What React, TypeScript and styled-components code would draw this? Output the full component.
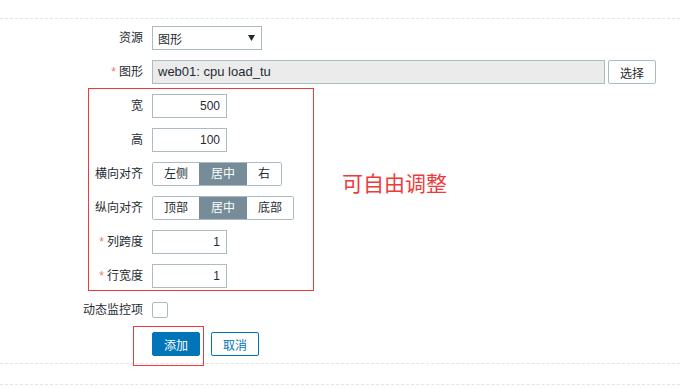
import React from 'react';
import styled, { createGlobalStyle } from 'styled-components';

const TEXT = '#1f2c33';
const BORDER = '#acbbc2';
const BLUE = '#0275b8';
const MARK = '#ee3a3a';

const GlobalStyle = createGlobalStyle`
  body {
    margin: 0;
    background: #fff;
    color: ${TEXT};
    font-family: "Liberation Sans", "Noto Sans CJK SC", sans-serif;
    font-size: 12px;
  }
`;

const Page = styled.div`
  position: relative;
  width: 680px;
  height: 388px;
  overflow: hidden;
  padding-top: 18px;
  box-sizing: border-box;
`;

const Form = styled.div`
  display: grid;
  grid-template-columns: 143px 1fr;
  column-gap: 9px;
  row-gap: 10px;
  align-items: center;
  padding: 7px 24px 7px 0;
  border-top: 1px dashed #e4e4e4;
  border-bottom: 1px dashed #e4e4e4;
`;

const NextSection = styled.div`
  margin-top: 20px;
  border-top: 1px dashed #e4e4e4;
`;

const Label = styled.label`
  text-align: right;
  line-height: 24px;
  white-space: nowrap;
`;

const Star = styled.span`
  color: #ec7a6e;
  margin-right: 3px;
`;

const Field = styled.div`
  display: flex;
  align-items: center;
  gap: ${({ $gap }) => $gap ?? 0}px;
  height: 24px;
`;

const Select = styled.div`
  box-sizing: border-box;
  width: 110px;
  height: 24px;
  border: 1px solid ${BORDER};
  display: flex;
  align-items: center;
  justify-content: space-between;
  padding: 0 6px 0 5px;
`;

const TextBox = styled.div`
  box-sizing: border-box;
  width: ${({ $width }) => $width}px;
  height: 24px;
  border: 1px solid ${BORDER};
  line-height: 22px;
  padding: 0 6px 0 5px;
  text-align: ${({ $align }) => $align ?? 'left'};
  background: ${({ $readonly }) => ($readonly ? '#ebebeb' : '#fff')};
  font-size: ${({ $readonly }) => ($readonly ? 13 : 12)}px;
`;

const Button = styled.button`
  box-sizing: border-box;
  height: 24px;
  padding: 0 11px;
  font: inherit;
  border-radius: 2px;
  border: 1px solid ${({ $variant }) => ($variant === 'grey' ? BORDER : BLUE)};
  background: ${({ $variant }) => ($variant === 'primary' ? BLUE : '#fff')};
  color: ${({ $variant }) => ($variant === 'primary' ? '#fff' : $variant === 'outline' ? BLUE : TEXT)};
`;

const Segmented = styled.div`
  display: flex;
  height: 24px;
  border: 1px solid ${BORDER};
  border-radius: 2px;
  box-sizing: border-box;
  overflow: hidden;
`;

const Segment = styled.span`
  padding: 0 11px;
  line-height: 22px;
  background: ${({ $active }) => ($active ? '#768d99' : '#fff')};
  color: ${({ $active }) => ($active ? '#fff' : TEXT)};
  & + & {
    border-left: 1px solid ${({ $active }) => ($active ? '#768d99' : BORDER)};
  }
`;

const Checkbox = styled.span`
  width: 16px;
  height: 16px;
  box-sizing: border-box;
  border: 1px solid ${BORDER};
  border-radius: 2px;
  background: #fff;
`;

const Frame = styled.div`
  position: absolute;
  left: ${({ $x }) => $x}px;
  top: ${({ $y }) => $y}px;
  width: ${({ $w }) => $w}px;
  height: ${({ $h }) => $h}px;
  border: 1px solid ${MARK};
  box-sizing: border-box;
  pointer-events: none;
`;

const Note = styled.div`
  position: absolute;
  left: 342px;
  top: 172px;
  font-size: 21px;
  line-height: 24px;
  color: ${MARK};
`;

const Arrow = () => (
  <svg width="7" height="6" viewBox="0 0 7 6">
    <polygon points="0,0 7,0 3.5,6" fill={TEXT} />
  </svg>
);

const SegmentGroup = ({ items, active }) => (
  <Segmented>
    {items.map((item) => (
      <Segment key={item} $active={item === active}>{item}</Segment>
    ))}
  </Segmented>
);

const App = () => (
  <Page>
    <GlobalStyle />
    <Form>
      <Label>资源</Label>
      <Field>
        <Select>
          <span>图形</span>
          <Arrow />
        </Select>
      </Field>

      <Label><Star>*</Star>图形</Label>
      <Field $gap={3}>
        <TextBox $width={453} $readonly>web01: cpu load_tu</TextBox>
        <Button $variant="grey">选择</Button>
      </Field>

      <Label>宽</Label>
      <Field><TextBox $width={75} $align="right">500</TextBox></Field>

      <Label>高</Label>
      <Field><TextBox $width={75} $align="right">100</TextBox></Field>

      <Label>横向对齐</Label>
      <Field><SegmentGroup items={['左侧', '居中', '右']} active="居中" /></Field>

      <Label>纵向对齐</Label>
      <Field><SegmentGroup items={['顶部', '居中', '底部']} active="居中" /></Field>

      <Label><Star>*</Star>列跨度</Label>
      <Field><TextBox $width={75} $align="right">1</TextBox></Field>

      <Label><Star>*</Star>行宽度</Label>
      <Field><TextBox $width={75} $align="right">1</TextBox></Field>

      <Label>动态监控项</Label>
      <Field><Checkbox /></Field>

      <span />
      <Field $gap={11}>
        <Button $variant="primary">添加</Button>
        <Button $variant="outline">取消</Button>
      </Field>
    </Form>
    <NextSection />

    <Frame $x={88} $y={88} $w={226} $h={203} />
    <Frame $x={133} $y={326} $w={71} $h={40} />
    <Note>可自由调整</Note>
  </Page>
);

export default App;
